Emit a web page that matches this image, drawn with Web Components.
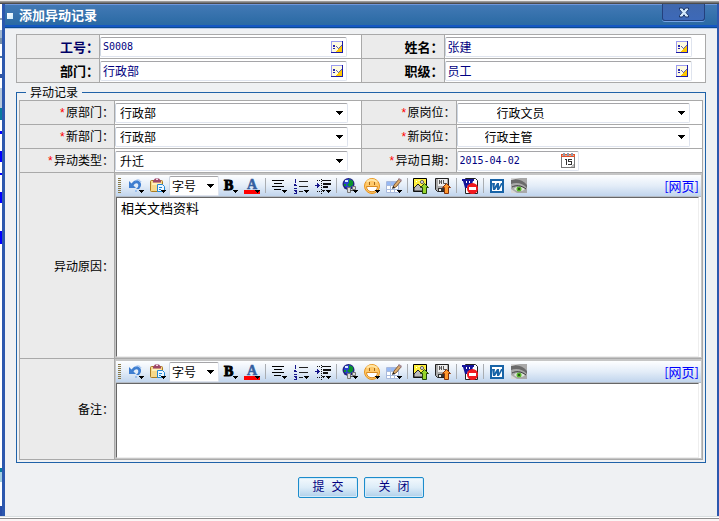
<!DOCTYPE html>
<html lang="zh-CN">
<head>
<meta charset="utf-8">
<title>添加异动记录</title>
<style>
  html, body { margin: 0; padding: 0; height: 100%; }
  body { font: 12px/16px "Noto Sans CJK SC", sans-serif; color: #000; background: #fbf7f7; }
</style>
</head>
<body>
<app-backdrop>
  <dialog-window>
    <span slot="title">添加异动记录</span>
    <transfer-form></transfer-form>
  </dialog-window>
</app-backdrop>

<script>
const define = (name, html, setup, opts = {}) => {
  const tpl = document.createElement('template');
  tpl.innerHTML = html;
  customElements.define(name, class extends HTMLElement {
    static formAssociated = !!opts.field;
    constructor() {
      super();
      this.attachShadow({ mode: 'open', delegatesFocus: !!opts.field }).append(tpl.content.cloneNode(true));
    }
    connectedCallback() { if (setup) setup(this, this.shadowRoot); }
  });
};

const drop = '<path d="M11 12h5v1h-1v1h-1v1h-1v-1h-1v-1h-1z" fill="#000" shape-rendering="crispEdges"/>';
const ICONS = {
  undo: `<path d="M1 3v7h7L5.500 7.500C7 5 9 4.500 10 6c1 2-.5 4-2 5h3c2-2 3-5 1-7-2.500-3-6-2-8.500 1.500z" fill="#3f7ed0"/><path d="M7 3c3-2 5-1 6 1" stroke="#8bb5ee" fill="none"/><path d="M7 12h2v2H7z" fill="#9cc0ee"/>${drop}`,
  paste: `<rect x=".5" y="2.500" width="12" height="11" rx="1" fill="#f7d98b" stroke="#a87a20"/><path d="M2 5h9v2H2z" fill="#fff0b8"/><path d="M3 4.500V3l2-2.500h4L11 3v1.500z" fill="#9d4568"/><path d="M6 1h2v1H6z" fill="#f4d5e4"/><path d="M7.500 6.500h5l2 2v5h-7z" fill="#eef7ff" stroke="#2187d5"/><path d="M9 9.500h3M9 11.500h2" stroke="#2187d5"/>${drop}`,
  bold: `<text x="2" y="12" font-family="Liberation Serif" font-size="14" font-weight="700" stroke="#000">B</text>${drop}`,
  color: `<text x="3" y="11" font-family="Liberation Serif" font-size="14" font-weight="700" fill="#355f9f" stroke="#355f9f" stroke-width=".5">A</text><path d="M0 12h16v4H0z" fill="#f00"/>${drop}`,
  align: `<path d="M1 2.500h12M3 5.500h8M1 8.500h12M3 11.500h7" stroke="#000"/>${drop}`,
  list: `<path d="M6 3.500h9M6 8.500h9M6 13.500h4" stroke="#222"/><path d="M2 1h1v4H2zM1 2h1M1 6h2v1h1v1H3v1H2v1h2v1H1v-1h1V9h1V8H1zM1 12h3v4H1v-1h2v-1H2v-1H1z" fill="#15158a"/>${drop}`,
  indent: `<path d="M7 2.500h9M7 12.500h3" stroke="#111"/><path d="M8 6h8M8 9h5" stroke="#111" stroke-width="2"/><path d="M0 7h2V5h1v1h1v1h1v1H4v1H3v1H2V8H0z" fill="#15158a"/><path d="M6.500 1v15M2 2.500h4M2 13.500h8" stroke="#111" stroke-dasharray="1 1"/>${drop}`,
  globe: `<circle cx="6.500" cy="6" r="6" fill="#24247e"/><circle cx="6.500" cy="5.500" r="4.500" fill="#2a3fd0"/><path d="M7 1l4 2v4L8 9 5 7l2-2zM2 6h2v2H2z" fill="#0a942c"/><path d="M3 2h3v2H3z" fill="#d7e7ff"/><path d="M5.500 9.500h3v5h-3zM10.500 8.500h3v3h-3z" fill="#ddd" stroke="#777"/><path d="M8 12.500h3" stroke="#555"/>${drop}`,
  smile: `<circle cx="8" cy="8" r="7.500" fill="#ffc96a" stroke="#e8931b"/><path d="M3 4c2-3 7-3 10 0" fill="none" stroke="#ffe6a6" stroke-width="2"/><path d="M5.500 4v3M10.500 4v3" stroke="#a3681c"/><path d="M2.500 8.500h11c0 7-11 7-11 0z" fill="#fff" stroke="#d98a20"/>${drop}`,
  table: `<path d="M.5 3.500h12v11H.5z" fill="#fff" stroke="#a9b9dc"/><path d="M1 4h11v3H1z" fill="#96b8f4"/><path d="M1 7.500h11M1 11.500h11M4.500 4v11M8.500 4v11" stroke="#a8bbdc"/><path d="M7 10l1-3 5-6 2 2-5 6z" fill="#e0ad6c" stroke="#694421" stroke-width=".8"/><path d="M12 1l1-1 3 2-1 2z" fill="#a58a92"/><path d="M6 11l1-3 2 1.500z" fill="#222"/>${drop}`,
  image: `<path d="M.5.5h13v13H.5z" fill="#fff03c" stroke="#000"/><path d="M1 10l4-4 4 4 4-1v4H1z" fill="#bbb" stroke="#222"/><circle cx="9" cy="4" r="1.500" fill="#fff" stroke="#555"/><path d="M3 3l1 1M6 2v1M11 5l1 1" stroke="#fff"/><path d="M11.500 5.500l4 4h-2v6h-4v-6h-2z" fill="#96d62c" stroke="#22470b"/>`,
  disk: `<path d="M.5.500h13v13h-11l-2-2z" fill="#aaa" stroke="#222"/><path d="M3 1h9v7H3z" fill="#eee"/><path d="M4.500 2v4M6.500 2v4M4 4h3M8.500 2v3.500h3" stroke="#555" fill="none"/><path d="M3 10h6v3H3z" fill="#333"/><path d="M4 11h2v2H4z" fill="#eee"/><path d="M11.500 5.500l4 4h-2v6h-4v-6h-2z" fill="#ff982e" stroke="#85320b"/>`,
  cleanWord: `<path d="M3.500.500h10l2 2v13h-12z" fill="#fff" stroke="#222"/><path d="M0 1h12v2h-1l-2 7H7L6 7l-1 3H3L1 3H0z" fill="#15159a"/><path d="M4 3h1v2H4zM7 3h1v2H7z" fill="#fff"/><circle cx="10.500" cy="10.500" r="5.500" fill="#f2191f"/><path d="M7 9h7v3H7z" fill="#fff"/>`,
  word: `<path d="M1 1h14v14H1z" fill="#1763a7"/><path d="M3 3h10v10H3z" fill="#fff"/><path d="M3 5h3l-.500 4L8 5h2v4l2-4h2l-4 7H8V9l-2 3H4z" fill="#1763a7"/>`,
  eye: `<path d="M0 0h16v15H0z" fill="#a9a9a9"/><path d="M0 2C6 0 12 2 16 7v3C12 5 5 4 0 6z" fill="#6a6a6a"/><path d="M0 0h9L0 2zM0 11l6 4H0z" fill="#d8d8d8"/><path d="M3 11c2-3 7-3 11 0-3 3-8 3-11 0z" fill="#dfe6da"/><circle cx="8" cy="11" r="2.500" fill="#58b82b"/><circle cx="8" cy="11" r="1" fill="#183c0c"/><path d="M1 9c4-2 9-2 14 2" stroke="#3c3c3c" fill="none"/>`
};

define('app-backdrop', `
<style>
  :host { display: flex; flex-direction: column; min-height: 100vh; }
  .top { height: 4px; background: linear-gradient(#ececec 0 1px, #999 1px 2px, #777 2px 3px, #4c4c4c 3px); }
  .middle { flex: 1; display: flex; padding-left: 2px;
    background: linear-gradient(#fff 0 14px, #99a5b5 14px 16px, #fff 16px 26px, #a2b8cf 26px 34px, #7890aa 34px 40px, #fff 40px 52px, #4770a5 52px 54px, #fff 54px 70px, #3255a0 70px 74px, #fff 74px 84px, #b7c9dc 84px 104px, #087ba0 104px 116px, #fff 116px 127px, #00f 127px 130px, #fff 130px 147px, #00f 147px 158px, #fff 158px 169px, #00f 169px 171px, #fff 171px 188px, #00f 188px 199px, #fff 199px 227px, #00f 227px 240px, #fff 240px 464px, #0779a3 464px 468px, #a3cfe1 468px 478px, #fff 478px 502px, #274da8 502px); }
  ::slotted(*) { flex: 1; }
  .bottom { height: 5px; background: linear-gradient(#d9dfe0 0 1px, #fff 1px 2px, #8c8c8c 2px 3px, #fbf5f5 3px); }
</style>
<div class="top"></div>
<div class="middle"><slot></slot></div>
<div class="bottom"></div>`);

define('dialog-window', `
<style>
  :host { display: flex; flex-direction: column; box-sizing: border-box; border: solid #2c58ae; border-width: 0 2px 0 3px; background: #eff1f3; }
  header { display: flex; align-items: flex-start; height: 24px; border-bottom: 1px solid #b9cbea;
    background: linear-gradient(#6f97dc 0 1px, #4279b5 1px, #2a6aa4 21px, #1457c4 21px 23px, #0b4a90 23px); }
  .bullet { width: 6px; height: 6px; margin: 9px 6px 0 2px; background: linear-gradient(135deg, #fff, #cdeafa); }
  h1 { flex: 1; margin: 2px 0 0; font-size: 13px; line-height: 18px; color: #fff; }
  button { width: 43px; height: 17px; margin-right: 12px; padding: 0; border: 1px solid #24407d; border-top: 0; border-radius: 0 0 3px 3px; background: linear-gradient(#4068ad, #3d69b8); box-shadow: 0 1px 0 #73a3e6; display: flex; justify-content: center; align-items: center; }
  main { padding: 5px 11px 0; }
</style>
<header>
  <i class="bullet"></i>
  <h1><slot name="title"></slot></h1>
  <button type="button" aria-label="关闭窗口"><svg width="12" height="11" viewBox="0 0 12 11"><path d="M1.500 1h3L6 3.200 7.500 1h3v1.500L8 5.500l2.500 3V10h-3L6 7.800 4.500 10h-3V8.500l2.500-3-2.500-3z" fill="#d4eafc" stroke="#1d3768"/></svg></button>
</header>
<main><slot></slot></main>`);

define('picker-field', `
<style>
  :host { display: block; width: 95%; }
  .box { display: flex; align-items: center; box-sizing: border-box; height: 20px; padding-right: 3px; background: #fff; border: 1px solid; border-color: #a5a5a8 #dfe4ee #dfe4ee #cdd6e2; border-radius: 2px; }
  input { flex: 1; min-width: 0; height: 18px; box-sizing: border-box; border: 0; padding: 0 0 0 2px; background: none; outline: 0; color: #000080; font: 12px/18px "Noto Sans CJK SC", sans-serif; }
  :host([code]) input { font: 10px/18px "DejaVu Sans Mono", monospace; }
  button { display: flex; padding: 0; border: 0; background: none; }
  svg { display: block; }
</style>
<div class="box"><input type="text"><button type="button"></button></div>`,
(host, root) => {
  const input = root.querySelector('input'), button = root.querySelector('button');
  input.value = host.getAttribute('value');
  input.setAttribute('aria-label', host.getAttribute('name'));
  button.setAttribute('aria-label', '选择' + host.getAttribute('name'));
  button.innerHTML = host.hasAttribute('date')
    ? '<svg width="14" height="15" viewBox="0 0 14 15" shape-rendering="crispEdges"><path d="M.5 2.500h13v12H.5z" fill="#fff" stroke="#777"/><path d="M0 1h14v3H0z" fill="#e2512a"/><path d="M1 2h12v1H1z" fill="#f6a483"/><path d="M2 0h2v3H2zM6 0h2v3H6zM10 0h2v3h-2z" fill="#8d9bab"/><path d="M4 6h2v6H5V7H4zM7 6h4v1H8v1h3v4H7v-1h3V9H7z" fill="#333"/><path d="M9 14l4-4v4z" fill="#bbb"/></svg>'
    : '<svg width="12" height="12" viewBox="0 0 12 12" shape-rendering="crispEdges"><path d="M0 0h12v12H0z" fill="#1c1ca8"/><path d="M0 0h11v1H1v10H0z" fill="#9c9cf0"/><path d="M1 1h10v10H1z" fill="#fffbe0"/><path d="M11 4v7H4z" fill="#ffc800"/><path d="M2 4h2v2H2zM2 7h2v1H2z" fill="#2424b4"/><path d="M5 5h1v1h1v1h1V6h1V5h1V4h1v1h-1v1H9v1H8v1H7V7H6V6H5z" fill="#6464b0"/></svg>';
}, { field: true });

define('choice-field', `
<style>
  :host { display: block; width: 95%; }
  .box { display: grid; align-items: center; box-sizing: border-box; height: 20px; background: #fff; border: 1px solid; border-color: #a5a5a8 #dfe4ee #dfe4ee #cdd6e2; border-radius: 2px; }
  select, svg { grid-area: 1 / 1; }
  select { appearance: none; width: 100%; height: 18px; border: 0; margin: 0; padding: 0 16px 0 var(--indent, 4px); background: none; outline: 0; color: #000; font: 12px/18px "Noto Sans CJK SC", sans-serif; }
  svg { justify-self: end; margin-right: 4px; pointer-events: none; }
</style>
<div class="box"><select></select><svg width="7" height="4" viewBox="0 0 7 4" shape-rendering="crispEdges"><path d="M0 0h7v1H6v1H5v1H4v1H3V3H2V2H1V1H0z"/></svg></div>`,
(host, root) => {
  const select = root.querySelector('select');
  select.setAttribute('aria-label', host.getAttribute('name'));
  select.replaceChildren(new Option(host.getAttribute('value')));
}, { field: true });

define('tool-button', `
<style>
  :host { display: block; flex: none; width: 22px; }
  button { display: flex; justify-content: center; width: 100%; padding: 0; border: 0; background: none; }
</style>
<button type="button"></button>`,
(host, root) => {
  const b = root.querySelector('button');
  b.setAttribute('aria-label', host.getAttribute('label'));
  b.innerHTML = `<svg width="16" height="20" viewBox="0 -2 16 20" aria-hidden="true">${ICONS[host.getAttribute('icon')]}</svg>`;
});

define('rich-editor', `
<style>
  :host { display: block; border: 1px solid #c6c6c6; border-top-width: 2px; background: #fff; }
  .bar { display: flex; align-items: center; height: 21px; border-bottom: 1px solid #b5bcc6; background: linear-gradient(#fdfeff, #e4edf8 50%, #c1d5ed); }
  .grip { flex: none; width: 3px; height: 16px; margin: 0 4px 0 2px; background: repeating-linear-gradient(#8b7a48 0 1px, transparent 1px 2px); }
  .bar choice-field { flex: none; width: 50px; --indent: 2px; }
  hr { flex: none; width: 1px; height: 15px; margin: 0 2px; border: 0; background: #a9adb2; }
  a { margin-left: auto; padding-right: 2px; font-size: 13px; line-height: 20px; color: #00f; text-decoration: none; }
  textarea { display: block; box-sizing: border-box; width: calc(100% - 2px); height: var(--editor-height, 160px); margin: 0; padding: 1px 4px; resize: none; outline: 0; border: solid; border-width: 1px; border-color: #666 #eee #eee #666; border-radius: 0; background: #fff; color: #000; font: 13px/18px "Noto Sans CJK SC", sans-serif; }
</style>
<div class="bar" role="toolbar">
  <i class="grip"></i>
  <tool-button icon="undo" label="撤销"></tool-button>
  <tool-button icon="paste" label="粘贴"></tool-button>
  <choice-field name="字号" value="字号"></choice-field>
  <tool-button icon="bold" label="加粗"></tool-button>
  <tool-button icon="color" label="颜色"></tool-button><hr>
  <tool-button icon="align" label="对齐"></tool-button>
  <tool-button icon="list" label="列表"></tool-button>
  <tool-button icon="indent" label="缩进"></tool-button><hr>
  <tool-button icon="globe" label="链接"></tool-button>
  <tool-button icon="smile" label="表情"></tool-button>
  <tool-button icon="table" label="表格"></tool-button><hr>
  <tool-button icon="image" label="图片"></tool-button>
  <tool-button icon="disk" label="保存"></tool-button><hr>
  <tool-button icon="cleanWord" label="清除格式"></tool-button><hr>
  <tool-button icon="word" label="导入文档"></tool-button>
  <tool-button icon="eye" label="预览"></tool-button>
  <a href="#">[网页]</a>
</div>
<textarea></textarea>`,
(host, root) => {
  const area = root.querySelector('textarea');
  area.value = host.getAttribute('value') || '';
  area.setAttribute('aria-label', host.getAttribute('name'));
}, { field: true });

define('action-button', `
<style>
  :host { display: block; }
  button { width: 60px; height: 21px; padding: 0; border: 1px solid #1c8ccc; border-radius: 2px; box-shadow: inset 0 0 0 1px #d5ebf8; background: linear-gradient(#f3f9fd, #dcecf8 50%, #b0d0ea); color: #000080; font: 12px/18px "Liberation Mono", "Noto Sans CJK SC", monospace; }
</style>
<button type="button"><slot></slot></button>`);

define('transfer-form', `
<style>
  :host { display: block; }
  table { width: 100%; table-layout: fixed; border-collapse: collapse; background: #fff; }
  th, td { height: 23px; padding: 0; border: 1px solid #a9a9a9; }
  th { background: #ebebeb; text-align: right; font-weight: 400; white-space: nowrap; }
  .summary th { font-size: 13px; font-weight: 700; }
  .summary .key { color: #000066; }
  .summary .label { width: 83px; }
  .record .label { width: 95px; }
  b { color: #f00; font: 12px/16px "Liberation Mono", monospace; }
  fieldset { min-width: 0; margin: 1px 0 0; padding: 0 2px 2px; border: 1px solid #1f62a8; }
  legend { margin-left: 7px; padding: 0 4px; line-height: 16px; }
  .remark { --editor-height: 75px; }
  .date { width: 50%; }
  .actions { display: flex; justify-content: center; gap: 6px; padding: 14px 0; }
</style>
<table class="summary">
  <colgroup><col class="label"><col><col class="label"><col></colgroup>
  <tr><th><label class="key" for="no">工号：</label></th><td><picker-field id="no" name="工号" value="S0008" code></picker-field></td>
      <th><label for="name">姓名：</label></th><td><picker-field id="name" name="姓名" value="张建"></picker-field></td></tr>
  <tr><th><label for="dept">部门：</label></th><td><picker-field id="dept" name="部门" value="行政部"></picker-field></td>
      <th><label for="rank">职级：</label></th><td><picker-field id="rank" name="职级" value="员工"></picker-field></td></tr>
</table>
<fieldset>
  <legend>异动记录</legend>
  <table class="record">
    <colgroup><col class="label"><col><col class="label"><col></colgroup>
    <tr><th><label for="d1"><b>*</b>原部门：</label></th><td><choice-field id="d1" name="原部门" value="行政部"></choice-field></td>
        <th><label for="p1"><b>*</b>原岗位：</label></th><td><choice-field id="p1" name="原岗位" value="行政文员" style="--indent: 39px"></choice-field></td></tr>
    <tr><th><label for="d2"><b>*</b>新部门：</label></th><td><choice-field id="d2" name="新部门" value="行政部"></choice-field></td>
        <th><label for="p2"><b>*</b>新岗位：</label></th><td><choice-field id="p2" name="新岗位" value="行政主管" style="--indent: 27px"></choice-field></td></tr>
    <tr><th><label for="kind"><b>*</b>异动类型：</label></th><td><choice-field id="kind" name="异动类型" value="升迁"></choice-field></td>
        <th><label for="date"><b>*</b>异动日期：</label></th><td><picker-field id="date" class="date" name="异动日期" value="2015-04-02" code date></picker-field></td></tr>
    <tr><th><label for="reason">异动原因：</label></th><td colspan="3"><rich-editor id="reason" name="异动原因" value="相关文档资料"></rich-editor></td></tr>
    <tr><th><label for="memo">备注：</label></th><td colspan="3"><rich-editor id="memo" class="remark" name="备注"></rich-editor></td></tr>
  </table>
</fieldset>
<div class="actions">
  <action-button>提 交</action-button>
  <action-button>关 闭</action-button>
</div>`);
</script>
</body>
</html>
